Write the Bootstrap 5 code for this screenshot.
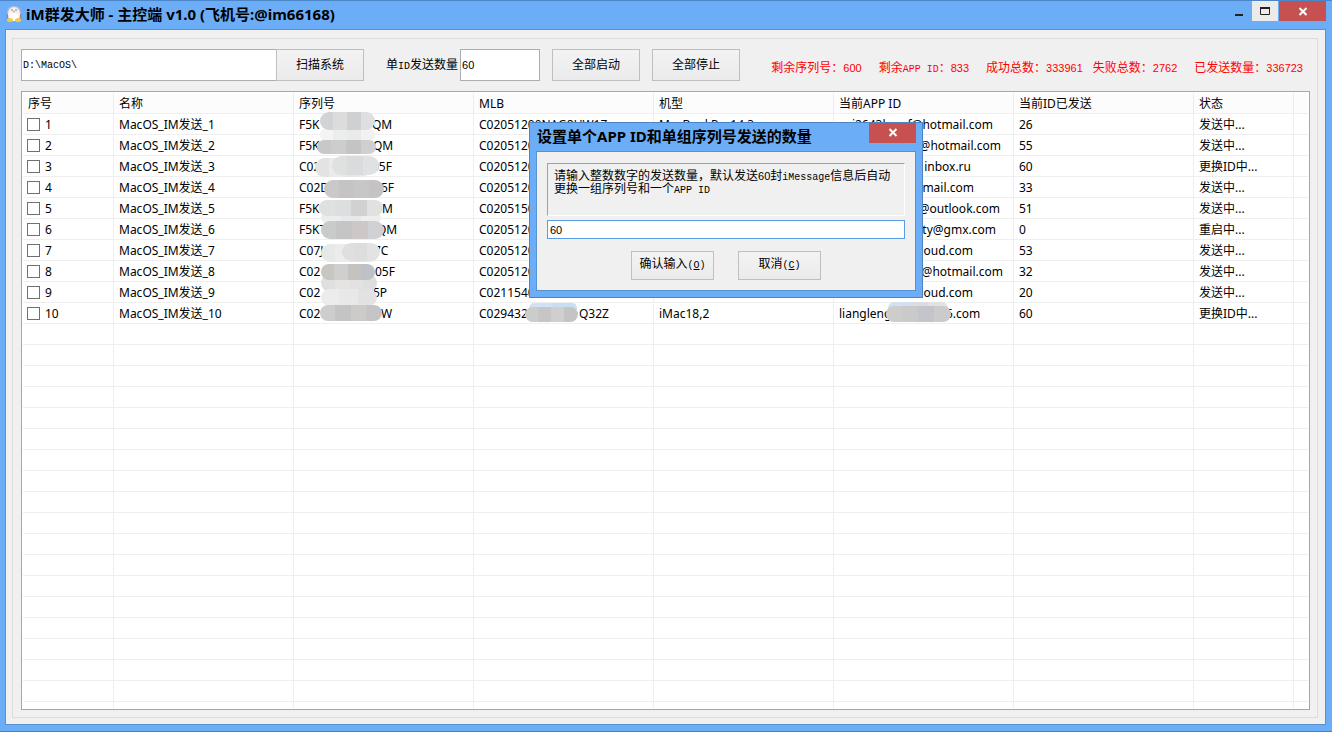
<!DOCTYPE html>
<html lang="zh-CN">
<head>
<meta charset="utf-8">
<meta name="viewport" content="width=device-width, initial-scale=1">
<title>iM群发大师 - 主控端 v1.0</title>
<link rel="stylesheet" href="https://cdn.jsdelivr.net/npm/bootstrap@5.3.0/dist/css/bootstrap.min.css">
<style>
:root { --frame: #6badf6; --edge: #5a90cd; --face: #f0f0f0; --ui: "Noto Sans", "Noto Sans CJK SC", sans-serif; --fixed: "Liberation Mono", "Noto Sans CJK SC", monospace; }
body { font-family: var(--ui); font-size: 12px; line-height: 20px; color: #000; background: var(--frame); }
.app-window { min-height: 100vh; padding: 0 6px 6px 5px; background: var(--frame); border-top: 1px solid #4a86c8; border-bottom: 1px solid #4a7fb9; }
.titlebar { height: 28px; padding-left: 1px; }
.title-text { font-family: "Noto Sans", "Noto Sans CJK SC", sans-serif; font-size: 15px; font-weight: 700; line-height: 26px; color: #000; white-space: nowrap; }
.win-btn { height: 20px; border: 0; padding: 0; display: flex; align-items: center; justify-content: center; background: transparent; }
.win-min { width: 26px; }
.win-max { width: 26px; background: #ebebeb; margin-right: 1px; }
.win-close { width: 47px; background: #c75050; }
.client { background: var(--face); border: 1px solid var(--edge); padding: 8px 7px 6px 6px; }
.group-frame { border: 1px solid #dcdcdc; padding: 10px 7px 7px 8px; }
.toolbar { font-family: var(--fixed); height: 32px; margin-bottom: 10px; white-space: nowrap; }
.field { font-family: var(--fixed); font-size: 10px; border: 1px solid #abadb3; border-radius: 0; background: #fff; padding: 0 1px; color: #000; outline: 0; }
.field-path { width: 256px; height: 32px; margin-right: -1px; }
.field-count { width: 80px; height: 32px; }
.field-num { font-family: "Liberation Sans", sans-serif; font-size: 11px; }
.field-label { margin-left: 22px; margin-right: 2px; padding-top: 2px; }
.push { font-family: var(--fixed); font-size: 12px; line-height: 20px; width: 88px; height: 32px; padding: 2px 0 0; color: #000; border: 1px solid #bfbfbf; background: linear-gradient(#f3f3f3, #ebebeb); border-radius: 0; }
.toolbar .field + .push.after-field, .push + .push.after-field { margin-left: 12px; }
.lat { font-size: 10px; }
.num { font-family: "Liberation Sans", sans-serif; font-size: 11px; }
.stats { color: #f00; padding-right: 7px; padding-top: 7px; }
.gap-w { margin-left: 17px; }
.gap-n { margin-left: 10px; }
.list-frame { border: 1px solid #a5a7aa; background: #fff; padding: 1px; flex: 1 1 0; min-height: 340px; overflow: hidden; }
.list-view { table-layout: fixed; width: 100%; border-collapse: separate; border-spacing: 0; margin: 0; }
.list-view th { height: 21px; font-weight: 400; line-height: 18px; padding: 2px 5px 0; background: #fcfcfd; border-right: 1px solid #e3eefb; border-bottom: 1px solid #e9f0fb; white-space: nowrap; }
.list-view td { height: 21px; line-height: 18px; padding: 2px 5px 0; border-right: 1px solid #efefef; border-bottom: 1px solid #efefef; white-space: nowrap; overflow: hidden; }
.list-view th:last-child, .list-view td:last-child { border-right: 0; }
.list-view td:first-child { padding-left: 4px; }
.list-view input { appearance: none; width: 13px; height: 13px; border: 1px solid #707070; background: #fff; margin: 0 5px 0 0; vertical-align: -2px; }
.slot { display: inline-block; overflow: visible; }
.slot-end { text-align: right; }
.smudge { position: absolute; left: 0; top: 0; pointer-events: none; }
.dialog { position: absolute; left: 529px; top: 121px; width: 394px; background: var(--frame); border: 1px solid #4c84c4; padding: 0 6px 6px; z-index: 5; }
.dialog-body { border: 1px solid var(--edge); background: var(--face); padding: 11px 10px 10px; }
.prompt { font-family: var(--fixed); font-size: 12px; line-height: 12px; height: 53px; margin-bottom: 4px; padding: 6px; border: 1px solid; border-color: #a0a0a0 #fff #fff #a0a0a0; white-space: nowrap; }
.field-answer { width: 100%; height: 19px; border-color: #569de5; padding: 0 2px; }
.dialog .push { width: 83px; height: 29px; padding: 0; }
</style>
</head>
<body>
<main class="app-window d-flex flex-column position-relative">
  <header class="titlebar d-flex align-items-start">
    <svg class="flex-shrink-0 mt-1" width="16" height="18" viewBox="0 0 16 18" aria-hidden="true">
      <path d="M1 15V8Q1 1 8 1T15 8V15Q14 17 12 15H4Q2 17 1 15Z" fill="#b9b6dc"/>
      <path d="M1 9Q2 12 1 14M15 9Q14 12 15 14" stroke="#8174ad" fill="none"/>
      <ellipse cx="8" cy="9" rx="6" ry="7" fill="#f3f0ef"/>
      <ellipse cx="8" cy="12" rx="5" ry="4" fill="#fff"/>
      <circle cx="6" cy="5" r="1" fill="#aaa"/><circle cx="10" cy="5" r="1" fill="#aaa"/>
      <path d="M7 6H9L8 8Z" fill="#c79b3c"/>
      <ellipse cx="4" cy="15" rx="3" ry="2" fill="#f4ca46"/><ellipse cx="12" cy="15" rx="3" ry="2" fill="#f4ca46"/>
    </svg>
    <h1 class="title-text m-0 ps-1">iM群发大师 - 主控端 v1.0 (飞机号:@im66168)</h1>
    <div class="d-flex ms-auto">
      <button class="win-btn win-min" type="button" aria-label="最小化"><svg width="12" height="12"><path d="M2 9H10V11H2Z" fill="#222"/></svg></button>
      <button class="win-btn win-max" type="button" aria-label="最大化"><svg width="12" height="12"><path d="M1.500 2.500H10.500V9.500H1.500Z" fill="none" stroke="#222"/><path d="M1 3H11" stroke="#222" stroke-width="2"/></svg></button>
      <button class="win-btn win-close" type="button" aria-label="关闭"><svg width="10" height="10"><path d="M1.500 2L8.500 9M8.500 2L1.500 9" stroke="#fff" stroke-width="2"/></svg></button>
    </div>
  </header>

  <div class="client d-flex flex-column flex-grow-1">
    <section class="group-frame d-flex flex-column flex-grow-1">
      <div class="toolbar d-flex align-items-center">
        <input class="field field-path" type="text" value="D:\MacOS\" aria-label="系统路径">
        <button class="btn push" type="button">扫描系统</button>
        <label class="field-label" for="count">单<span class="lat">ID</span>发送数量</label>
        <input class="field field-count field-num" id="count" type="text" value="60">
        <button class="btn push after-field" type="button">全部启动</button>
        <button class="btn push after-field" type="button">全部停止</button>
        <div class="stats d-flex ms-auto">
          <span>剩余序列号：<span class="num">600</span></span>
          <span class="gap-w">剩余<span class="lat">APP ID</span>：<span class="num">833</span></span>
          <span class="gap-w">成功总数：<span class="num">333961</span></span>
          <span class="gap-n">失败总数：<span class="num">2762</span></span>
          <span class="gap-w">已发送数量：<span class="num">336723</span></span>
        </div>
      </div>

      <div class="list-frame position-relative">
        <table class="list-view">
          <colgroup><col style="width:91px"><col style="width:180px"><col style="width:180px"><col style="width:180px"><col style="width:180px"><col style="width:180px"><col style="width:180px"><col style="width:100px"><col></colgroup>
          <thead><tr><th>序号</th><th>名称</th><th>序列号</th><th>MLB</th><th>机型</th><th>当前APP ID</th><th>当前ID已发送</th><th>状态</th><th></th></tr></thead>
          <tbody id="rows"></tbody>
        </table>
        <svg class="smudge" id="smudge" width="960" height="240" aria-hidden="true"></svg>
      </div>
    </section>
  </div>

  <section class="dialog" role="dialog" aria-labelledby="dlg-title">
    <header class="d-flex align-items-start titlebar">
      <h2 class="title-text m-0" id="dlg-title">设置单个APP ID和单组序列号发送的数量</h2>
      <button class="win-btn win-close ms-auto" type="button" aria-label="关闭"><svg width="10" height="10"><path d="M1.500 1L8.500 8M8.500 1L1.500 8" stroke="#fff" stroke-width="2"/></svg></button>
    </header>
    <form class="dialog-body">
      <label class="prompt d-block" for="answer">请输入整数数字的发送数量，默认发送<span class="num">60</span>封<span class="lat">iMessage</span>信息后自动<br>更换一组序列号和一个<span class="lat">APP ID</span></label>
      <input class="field field-answer field-num d-block" id="answer" type="text" value="60" autofocus>
      <div class="d-flex justify-content-center gap-4 pt-1 mt-2">
        <button class="btn push" type="button">确认输入<span class="lat">(<u>O</u>)</span></button>
        <button class="btn push" type="button">取消<span class="lat">(<u>C</u>)</span></button>
      </div>
    </form>
  </section>
</main>

<script>
// serial head, serial tail, tail offset, MLB, model, account, account width, sent, state
const data = [
  ["F5K", "QM", 73, "C02051200NAG8UW1Z", "MacBookPro14,3", "yj2643lawsf@hotmail.com", 154, 26, "发送中..."],
  ["F5K", "QM", 74, "C0205120", "", "@hotmail.com", 162, 55, "发送中..."],
  ["C02", "05F", 73, "C0205120", "", "inbox.ru", 132, 60, "更换ID中..."],
  ["C02D", "5F", 82, "C0205120", "", "mail.com", 135, 33, "发送中..."],
  ["F5K", "M", 83, "C0205150", "", "@outlook.com", 161, 51, "发送中..."],
  ["F5KT", "QM", 78, "C0205120", "", "ty@gmx.com", 157, 0, "重启中..."],
  ["C07J", "7C", 75, "C0205120", "", "icloud.com", 134, 53, "发送中..."],
  ["C02", "05F", 76, "C0205120", "", "@hotmail.com", 164, 32, "发送中..."],
  ["C02", "5P", 74, "C0211540", "", "icloud.com", 134, 20, "发送中..."],
  ["C02", "W", 82, "", "iMac18,2", "", 0, 60, "更换ID中..."]
];
const slot = (text, w, end) => `<span class="slot${end ? " slot-end" : ""}" style="width:${w}px">${text}</span>`;
let html = data.map((r, i) => {
  const mlb = i === 9 ? slot("C029432", 100) + "Q32Z" : r[3];
  const mail = i === 9 ? slot("liangleng", 107) + "5.com" : slot(r[5], r[6], true);
  return `<tr><td><label><input type="checkbox">${i + 1}</label></td><td>MacOS_IM发送_${i + 1}</td><td>${slot(r[0], r[2])}${r[1]}</td><td>${mlb}</td><td>${r[4]}</td><td>${mail}</td><td>${r[7]}</td><td>${r[8]}</td><td></td></tr>`;
}).join("");
for (let i = 0; i < 19; i++) html += "<tr>" + "<td></td>".repeat(9) + "</tr>";
document.getElementById("rows").innerHTML = html;

// Soft masks over the private parts: x, y, width, height, tile colours
const masks = [
  [298, 36, 55, 14, ["#f5f4f4", "#eceded", "#e9eaea", "#f3f1f1"]],
  [298, 20, 55, 18, ["#d2d3d4", "#dcdcdd", "#cfd0d2", "#dedfe0"]],
  [295, 48, 59, 14, ["#c8c8c9", "#cecdcd", "#c5c4c5", "#cfced0"]],
  [293, 66, 56, 19, ["#e3e3e3", "#ebebeb", "#e6e6e6", "#e9e9e9"]],
  [310, 64, 47, 19, ["#dfe0e0", "#dadbdc", "#dfe1e2"]],
  [302, 88, 60, 18, ["#cac8c8", "#c4c4c4", "#c8c7c7", "#c5c3c4"]],
  [299, 119, 60, 13, ["#eceded", "#e7e8e9", "#f0eeed"]],
  [297, 108, 64, 16, ["#dee0e1", "#dcdee0", "#d2d1d1", "#e0e1e1"]],
  [299, 129, 63, 18, ["#c9caca", "#c5c5c5", "#cdc8c7", "#d0d1d4"]],
  [299, 152, 58, 18, ["#e7e8e8", "#ebeced", "#e3e4e3", "#e9e9e8"]],
  [320, 151, 38, 18, ["#dfdfdf", "#dcdddc", "#e2e3e2"]],
  [299, 182, 56, 18, ["#e0dfdf", "#e6e3e3", "#e2e2e2", "#dedede"]],
  [299, 172, 54, 16, ["#c8c6c3", "#d0cfcf", "#c5c3bf", "#bec2c6"]],
  [299, 197, 56, 17, ["#ececec", "#e8e8e8", "#e3e2e2"]],
  [298, 213, 62, 16, ["#cecdce", "#c5c4c5", "#cecaca", "#c5c5c5"]],
  [507, 211, 48, 10, ["#d2e2f5", "#c9def5"]],
  [503, 215, 53, 15, ["#cdcccc", "#c7c6c6", "#d0cece", "#c5c4c5"]],
  [866, 210, 60, 12, ["#cfe1f5", "#d9dee5", "#e2e2e2"]],
  [864, 214, 65, 16, ["#cfcccc", "#cbcaca", "#c3c5ca", "#cccbcb"]]
];
document.getElementById("smudge").innerHTML = masks.map(([x, y, w, h, c], i) => {
  const t = w / c.length;
  return `<clipPath id="m${i}"><rect x="${x}" y="${y}" width="${w}" height="${h}" rx="${h / 2}"/></clipPath><g clip-path="url(#m${i})">` +
    c.map((f, k) => `<rect x="${Math.floor(x + k * t)}" y="${y}" width="${Math.ceil(t) + 1}" height="${h}" fill="${f}"/>`).join("") + "</g>";
}).join("");
const answer = document.getElementById("answer");
answer.focus();
answer.setSelectionRange(2, 2);
</script>
<script src="https://cdn.jsdelivr.net/npm/bootstrap@5.3.0/dist/js/bootstrap.bundle.min.js"></script>
</body>
</html>
